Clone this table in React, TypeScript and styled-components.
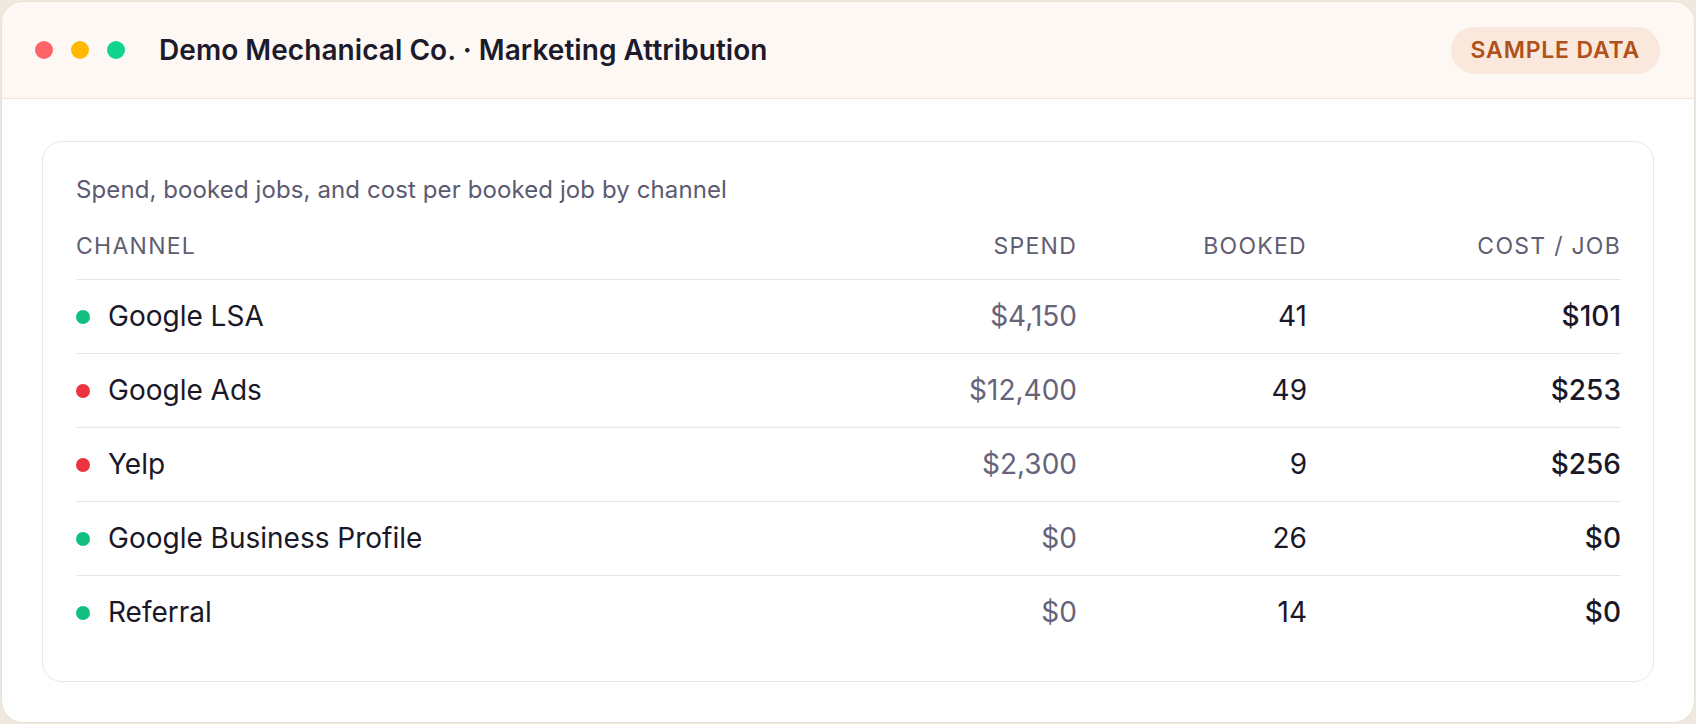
import React from "react";
import styled, { createGlobalStyle } from "styled-components";

const GlobalStyle = createGlobalStyle`
  html, body {
    margin: 0;
    padding: 0;
    background: #eee8de;
  }
  body {
    font-family: Inter, "Noto Sans", "Liberation Sans", sans-serif;
    -webkit-font-smoothing: antialiased;
  }
  * { box-sizing: border-box; }
`;

const Page = styled.div`
  padding: 1px;
  height: 724px;
  display: flex;
`;

const Window = styled.div`
  flex: 1;
  display: flex;
  flex-direction: column;
  background: #ffffff;
  border: 1px solid #e7e1d5;
  border-radius: 22px;
  overflow: hidden;
`;

const TitleBar = styled.header`
  height: 97px;
  flex: none;
  display: flex;
  align-items: center;
  padding: 0 34px 0 33px;
  background: #fdf8f4;
  border-bottom: 1px solid #ebe5da;
`;

const Lights = styled.div`
  display: flex;
  gap: 18px;
  margin-right: 34px;
`;

const Light = styled.span<{ $color: string }>`
  width: 18px;
  height: 18px;
  border-radius: 50%;
  background: ${(p) => p.$color};
`;

const Title = styled.h1`
  margin: 0;
  flex: 1;
  font-size: 28px;
  line-height: 34px;
  font-weight: 600;
  color: #1c1a2b;
  letter-spacing: 0.002em;
`;

const Badge = styled.span`
  padding: 9px 20px;
  border-radius: 999px;
  background: #fae8dc;
  color: #b0501a;
  font-size: 23px;
  font-weight: 600;
  line-height: 29px;
  letter-spacing: 0.035em;
`;

const Body = styled.main`
  flex: 1;
  padding: 42px 40px 40px;
  display: flex;
  flex-direction: column;
`;

const Card = styled.section`
  flex: 1;
  border: 1px solid #ebe6da;
  border-radius: 20px;
  padding: 32px 32px 32px 33px;
  display: flex;
  flex-direction: column;
`;

const Caption = styled.p`
  margin: 0 0 12px;
  font-size: 24px;
  line-height: 31px;
  letter-spacing: 0.1px;
  color: #5c5a70;
`;

const Row = styled.div<{ $head?: boolean; $last?: boolean }>`
  display: grid;
  grid-template-columns: 1fr 230px 230px 314px;
  align-items: center;
  border-bottom: ${(p) => (p.$last ? "none" : "1px solid #ebe6dc")};
  padding: ${(p) => (p.$head ? "14px 0 18px" : "22px 0")};
`;

const HeadCell = styled.div<{ $right?: boolean }>`
  font-size: 23px;
  line-height: 30px;
  font-weight: 400;
  letter-spacing: 0.055em;
  text-transform: uppercase;
  color: #5f5d72;
  text-align: ${(p) => (p.$right ? "right" : "left")};
`;

const Channel = styled.div`
  display: flex;
  align-items: center;
  gap: 18px;
  font-size: 28px;
  line-height: 29px;
  color: #1a1828;
`;

const Dot = styled.span<{ $color: string }>`
  width: 14px;
  height: 14px;
  border-radius: 50%;
  background: ${(p) => p.$color};
`;

const Num = styled.div<{ $tone: "muted" | "plain" | "strong" }>`
  text-align: right;
  font-size: 28px;
  line-height: 29px;
  font-weight: ${(p) => (p.$tone === "strong" ? 500 : 400)};
  color: ${(p) => (p.$tone === "muted" ? "#66647a" : "#1a1828")};
`;

const GREEN = "#12bf80";
const RED = "#ee3340";

const rows = [
  { name: "Google LSA", color: GREEN, spend: "$4,150", booked: "41", cost: "$101" },
  { name: "Google Ads", color: RED, spend: "$12,400", booked: "49", cost: "$253" },
  { name: "Yelp", color: RED, spend: "$2,300", booked: "9", cost: "$256" },
  { name: "Google Business Profile", color: GREEN, spend: "$0", booked: "26", cost: "$0" },
  { name: "Referral", color: GREEN, spend: "$0", booked: "14", cost: "$0" },
];

export default function App() {
  return (
    <>
      <GlobalStyle />
      <Page>
        <Window>
          <TitleBar>
            <Lights>
              <Light $color="#ff6467" />
              <Light $color="#ffb900" />
              <Light $color="#10d48e" />
            </Lights>
            <Title>Demo Mechanical Co. · Marketing Attribution</Title>
            <Badge>SAMPLE DATA</Badge>
          </TitleBar>
          <Body>
            <Card>
              <Caption>Spend, booked jobs, and cost per booked job by channel</Caption>
              <Row $head>
                <HeadCell>Channel</HeadCell>
                <HeadCell $right>Spend</HeadCell>
                <HeadCell $right>Booked</HeadCell>
                <HeadCell $right>Cost / Job</HeadCell>
              </Row>
              {rows.map((r, i) => (
                <Row key={r.name} $last={i === rows.length - 1}>
                  <Channel>
                    <Dot $color={r.color} />
                    {r.name}
                  </Channel>
                  <Num $tone="muted">{r.spend}</Num>
                  <Num $tone="plain">{r.booked}</Num>
                  <Num $tone="strong">{r.cost}</Num>
                </Row>
              ))}
            </Card>
          </Body>
        </Window>
      </Page>
    </>
  );
}
